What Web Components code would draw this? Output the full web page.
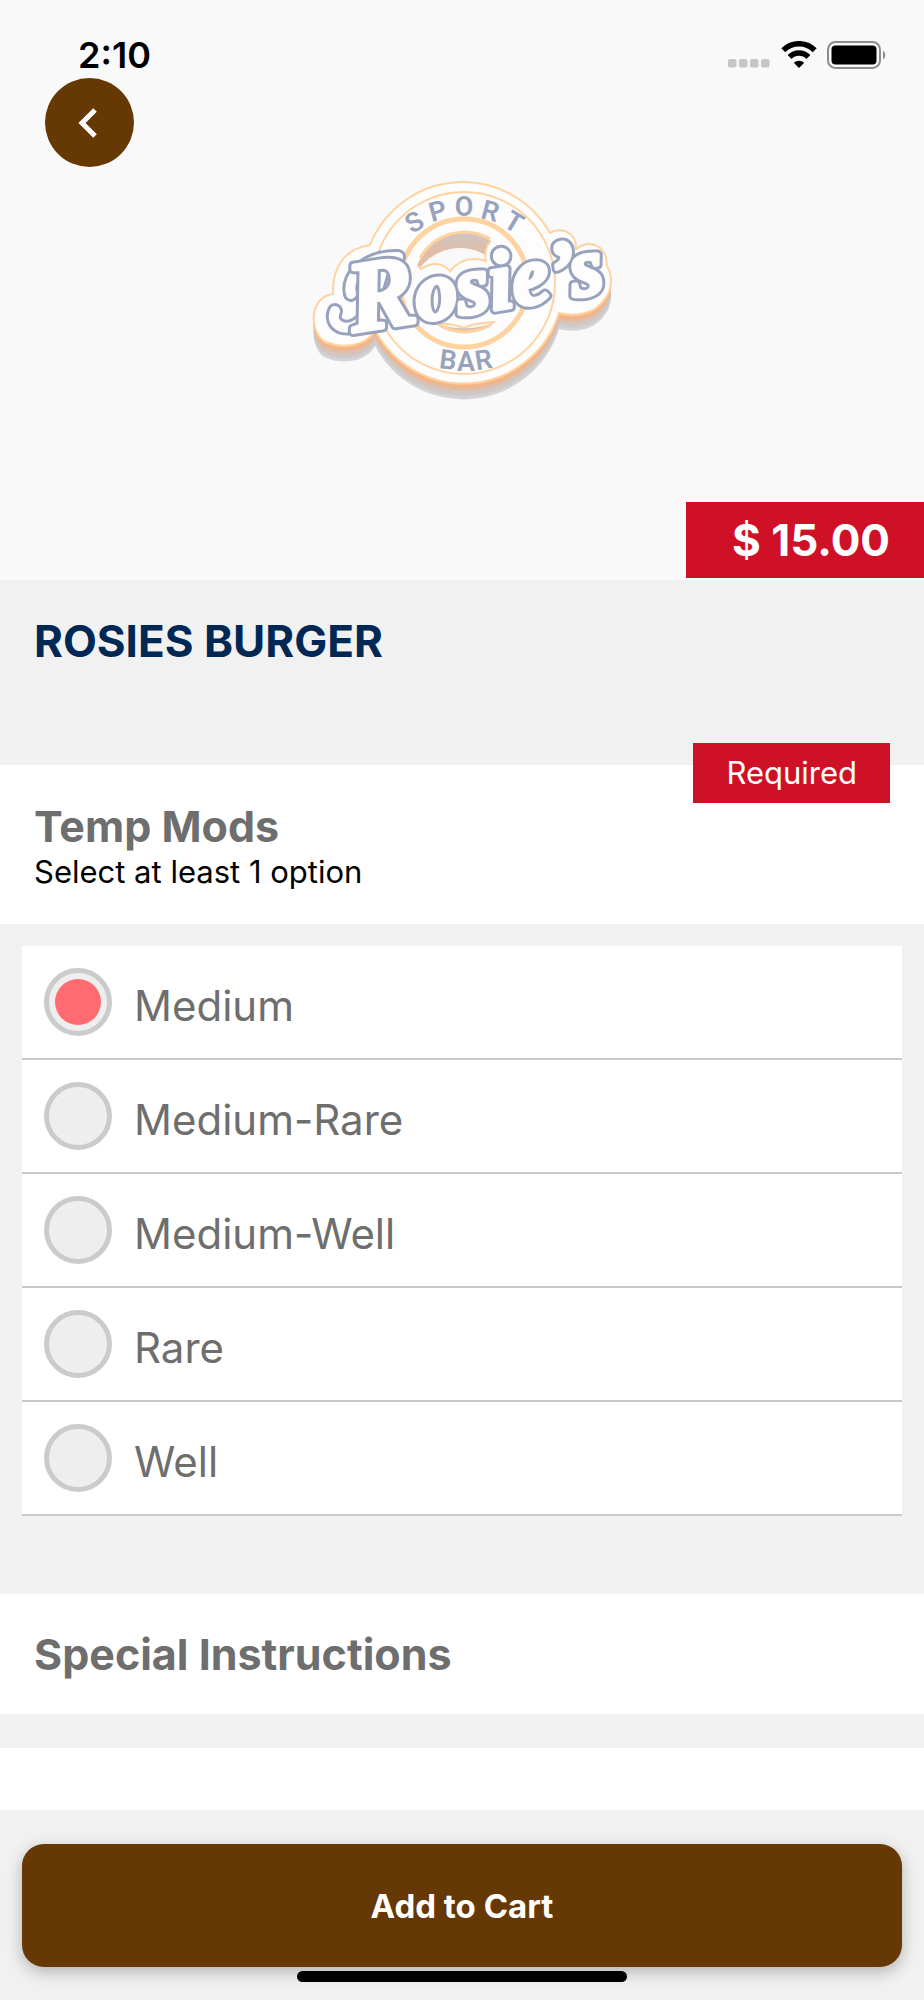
<!DOCTYPE html>
<html lang="en">
<head>
<meta charset="utf-8">
<meta name="viewport" content="width=device-width, initial-scale=1">
<title>Rosies Burger</title>
<style>
    body {
        margin: 0;
        background: #f1f1f1;
        color: #000;
        font-family: Inter, "Liberation Sans", sans-serif;
        --brand: #663803;
        --accent: #ce1126;
        --navy: #002855;
        --muted: #6e6e6e;
        --gutter: 22px;
        --inset: 34px;
    }
</style>
</head>
<body>
<item-page>
    <item-hero slot="hero" price="$ 15.00"></item-hero>
    <item-title slot="title">ROSIES BURGER</item-title>
    <mod-group heading="Temp Mods" hint="Select at least 1 option" badge="Required"
        options="Medium,Medium-Rare,Medium-Well,Rare,Well" selected="Medium"></mod-group>
    <item-notes heading="Special Instructions"></item-notes>
    <cart-bar slot="footer">Add to Cart</cart-bar>
</item-page>

<script>
(function(){
    // Clones the markup into an open shadow root
    function render(host, html){
        const template = document.createElement('template');
        template.innerHTML = html;
        host.attachShadow({mode: 'open'});
        host.shadowRoot.appendChild(template.content.cloneNode(true));
    }

    class ItemPage extends HTMLElement {
        connectedCallback(){
            render(this, `
                <style>
                    :host { display: flex; flex-direction: column; min-height: 100vh; }
                    main { flex: 1; }
                </style>
                <slot name="hero"></slot>
                <main>
                    <slot name="title"></slot>
                    <slot></slot>
                </main>
                <slot name="footer"></slot>
            `);
        }
    }

    class StatusBar extends HTMLElement {
        connectedCallback(){
            render(this, `
                <style>
                    :host {
                        display: flex;
                        justify-content: space-between;
                        align-items: center;
                        box-sizing: border-box;
                        height: 78px;
                        padding: 32px 37px 0 78px;
                    }
                    time { font-size: 36px; line-height: 46px; font-weight: 600; }
                    .icons { display: flex; align-items: center; gap: 10px; }
                    svg { display: block; }
                </style>
                <time>2:10</time>
                <div class="icons">
                    <svg width="43" height="28" viewBox="0 0 43 28" fill="#c6c6c6">
                        <rect x="0" y="18" width="8.500" height="8.500" rx="2"/>
                        <rect x="11" y="18" width="8.500" height="8.500" rx="2"/>
                        <rect x="22" y="18" width="8.500" height="8.500" rx="2"/>
                        <rect x="33" y="18" width="8.500" height="8.500" rx="2"/>
                    </svg>
                    <svg width="36" height="28" viewBox="0 0 36 28">
                        <g fill="none" stroke="#000" stroke-width="5.5">
                            <path d="M2.300 9.300 A 22 22 0 0 1 33.700 9.300"/>
                            <path d="M8.600 16 A 13 13 0 0 1 27.400 16"/>
                        </g>
                        <path d="M18 27 L12.800 21.800 A 7.500 7.500 0 0 1 23.200 21.800 Z"/>
                    </svg>
                    <svg width="60" height="28" viewBox="0 0 60 28">
                        <rect x="1" y="1" width="52" height="26" rx="7.500" fill="none" stroke="#8d8d8d" stroke-width="2"/>
                        <rect x="4.500" y="4.500" width="45" height="19" rx="4"/>
                        <path d="M56 9.500 A 5.500 5.500 0 0 1 56 18.500 Z" fill="#8d8d8d"/>
                    </svg>
                </div>
            `);
        }
    }

    class RosiesLogo extends HTMLElement {
        connectedCallback(){
            // The extruded side is the badge shape repeated, orange on top and grey at the bottom
            const side = ['#d6d6d8', '#d0cfd1', '#cfc9c9', '#d3c5bf', '#dbc0b1', '#e6b99d', '#f3b384', '#fbbf85'];
            const badge = 'M70 75 A100 100 0 0 1 250 63 C258 57 277 60 276 79 C290 69 307 75 307 96 C314 108 311 122 304 130 C294 144 276 147 259 143 A100 100 0 0 1 75 160 C67 176 43 179 26 172 C9 164 8 127 33 124 C32 98 44 79 70 75Z';
            const layers = side.map((fill, i) => `<path d="${badge}" transform="translate(0 ${16 - i * 2})" fill="${fill}"/>`).join('');

            render(this, `
                <style>
                    :host { display: block; width: 324px; }
                    svg { display: block; width: 100%; overflow: visible; }
                    .word { font: italic bold 84px "Liberation Serif", serif; }
                    .small { font: 600 27px Roboto, "Liberation Sans", sans-serif; text-anchor: middle; fill: #98a2bd; }
                </style>
                <svg viewBox="0 0 324 240" role="img" aria-label="Rosie's Sport Bar">
                    <defs>
                        <clipPath id="hole"><circle cx="164" cy="113" r="50"/></clipPath>
                        <linearGradient id="wall" x1="0" y1="0" x2="0" y2="1">
                            <stop offset="0" stop-color="#cfc6c4"/>
                            <stop offset=".2" stop-color="#e0bca6"/>
                            <stop offset="1" stop-color="#f2c49a"/>
                        </linearGradient>
                    </defs>
                    ${layers}
                    <path d="${badge}" fill="#fdfdfd" stroke="#ffd3a0" stroke-width="2"/>
                    <g fill="none" stroke="#ffd3a0">
                        <circle cx="164" cy="113" r="91" stroke-width="2"/>
                        <circle cx="164" cy="113" r="64" stroke-width="5"/>
                    </g>
                    <g clip-path="url(#hole)">
                        <circle cx="164" cy="113" r="51" fill="url(#wall)"/>
                        <circle cx="160" cy="129" r="51" fill="#f9f9f9"/>
                        <path d="M100 92 Q112 88 121 99 Q138 88 150 101 Q164 84 186 91 Q183 76 194 68 L230 80 V152 Q180 150 164 158 Q148 150 100 156Z"
                            fill="#fdfdfd" stroke="#ffd3a0" stroke-width="2"/>
                        <path d="M138 154 Q164 163 194 153 L186 161 Q164 168 142 160Z" fill="#dcc2b2"/>
                    </g>
                    <path d="M120 88 A51 51 0 0 1 190 69 M138 154 Q164 170 192 154" fill="none" stroke="#ffd3a0" stroke-width="3"/>
                    <g class="small">
                        <text transform="translate(119 60) rotate(-31)">S</text>
                        <text transform="translate(140 50) rotate(-15)">P</text>
                        <text transform="translate(164 46)">O</text>
                        <text transform="translate(188 50) rotate(15)">R</text>
                        <text transform="translate(209 60) rotate(31)">T</text>
                        <text transform="translate(147 199) rotate(7)">B</text>
                        <text transform="translate(166 201)">A</text>
                        <text transform="translate(185 199) rotate(-9)">R</text>
                    </g>
                    <!-- swash that leads into the R -->
                    <g fill="none" stroke-linecap="round">
                        <g stroke="#98a2bd" stroke-width="16">
                            <path d="M35 141 C29 155 46 164 60 152 C74 140 78 112 84 96"/>
                            <path d="M98 87 C70 86 46 104 51 124"/>
                        </g>
                        <g stroke="#fdfdfd" stroke-width="10">
                            <path d="M35 141 C29 155 46 164 60 152 C74 140 78 112 84 96"/>
                            <path d="M98 87 C70 86 46 104 51 124"/>
                        </g>
                    </g>
                    <g class="word" transform="translate(53 162) rotate(-9)" fill="#fdfdfd" stroke="#98a2bd"
                        stroke-width="10" stroke-linejoin="round" paint-order="stroke">
                        <text><tspan font-size="100">R</tspan>osie’s</text>
                        <text stroke="#fdfdfd" stroke-width="4" aria-hidden="true"><tspan font-size="100">R</tspan>osie’s</text>
                    </g>
                </svg>
            `);
        }
    }

    class ItemHero extends HTMLElement {
        connectedCallback(){
            render(this, `
                <style>
                    :host { display: flex; flex-direction: column; background: #f9f9f9; padding-bottom: 2px; }
                    button {
                        display: grid;
                        place-items: center;
                        width: 89px;
                        height: 89px;
                        margin: 0 0 0 45px;
                        padding: 0;
                        border: 0;
                        border-radius: 50%;
                        background: var(--brand);
                    }
                    rosies-logo { align-self: center; margin: 3px 0 92px; }
                    .price {
                        align-self: flex-end;
                        box-sizing: border-box;
                        padding: 10px 34px 10px 46px;
                        background: var(--accent);
                        color: #fff;
                        font-size: 44px;
                        line-height: 56px;
                        font-weight: 700;
                    }
                </style>
                <status-bar></status-bar>
                <button type="button" aria-label="Back">
                    <svg width="30" height="32" viewBox="0 0 30 32" fill="none" stroke="#fff" stroke-width="5">
                        <path d="M20 3 L7 16 L20 29"/>
                    </svg>
                </button>
                <rosies-logo></rosies-logo>
                <div class="price"></div>
            `);
            this.shadowRoot.querySelector('.price').textContent = this.getAttribute('price');
        }
    }

    class ItemTitle extends HTMLElement {
        connectedCallback(){
            render(this, `
                <style>
                    :host { display: block; padding: 33px var(--inset) 96px; }
                    h1 { margin: 0; color: var(--navy); font-size: 44px; line-height: 56px; font-weight: 700; }
                </style>
                <h1><slot></slot></h1>
            `);
        }
    }

    class ModGroup extends HTMLElement {
        connectedCallback(){
            render(this, `
                <style>
                    :host { display: block; }
                    header {
                        position: relative;
                        padding: 33px var(--inset) 34px;
                        background: #fff;
                    }
                    h2 { margin: 0; color: var(--muted); font-size: 43px; line-height: 56px; font-weight: 700; }
                    p { margin: 0; font-size: 31px; line-height: 36px; }
                    .badge {
                        position: absolute;
                        top: -22px;
                        right: 34px;
                        padding: 12px 33px;
                        background: var(--accent);
                        color: #fff;
                        font-size: 31px;
                        line-height: 36px;
                    }
                    .options { margin: 22px var(--gutter) 78px; }
                    label {
                        display: flex;
                        align-items: flex-start;
                        gap: 22px;
                        box-sizing: border-box;
                        min-height: 114px;
                        padding: 22px;
                        border-bottom: 2px solid #c8c8c8;
                        background: #fff;
                        color: var(--muted);
                        font-size: 42px;
                        line-height: 56px;
                    }
                    label span { padding-top: 10px; }
                    input {
                        appearance: none;
                        flex: none;
                        display: grid;
                        place-items: center;
                        box-sizing: border-box;
                        width: 68px;
                        height: 68px;
                        margin: 0;
                        border: 5px solid #cbcbcb;
                        border-radius: 50%;
                        background: #eee;
                    }
                    input:checked::before {
                        content: "";
                        width: 46px;
                        height: 46px;
                        border-radius: 50%;
                        background: #ff6b70;
                    }
                </style>
                <header>
                    <div class="badge"></div>
                    <h2 id="heading"></h2>
                    <p></p>
                </header>
                <div class="options" role="radiogroup" aria-labelledby="heading"></div>
            `);
            const root = this.shadowRoot;
            root.querySelector('h2').textContent = this.getAttribute('heading');
            root.querySelector('p').textContent = this.getAttribute('hint');
            root.querySelector('.badge').textContent = this.getAttribute('badge');
            this.getAttribute('options').split(',').forEach((name) => this._addOption(name));
        }

        /**
         * Appends one radio row, all rows share a name so only one is picked
         */
        _addOption(name){
            const label = document.createElement('label');
            const input = document.createElement('input');
            const text = document.createElement('span');
            input.type = 'radio';
            input.name = 'option';
            input.value = name;
            input.checked = name === this.getAttribute('selected');
            text.textContent = name;
            label.append(input, text);
            this.shadowRoot.querySelector('.options').appendChild(label);
        }
    }

    class ItemNotes extends HTMLElement {
        connectedCallback(){
            render(this, `
                <style>
                    :host { display: block; }
                    h2 {
                        margin: 0 0 34px;
                        padding: 32px var(--inset);
                        background: #fff;
                        color: var(--muted);
                        font-size: 43px;
                        line-height: 56px;
                        font-weight: 700;
                    }
                    textarea {
                        display: block;
                        box-sizing: border-box;
                        width: 100%;
                        height: 62px;
                        padding: 12px var(--inset);
                        border: 0;
                        outline: 0;
                        resize: none;
                        background: #fff;
                        font: inherit;
                        font-size: 31px;
                    }
                </style>
                <h2><label for="notes"></label></h2>
                <textarea id="notes"></textarea>
            `);
            this.shadowRoot.querySelector('label').textContent = this.getAttribute('heading');
        }
    }

    class CartBar extends HTMLElement {
        connectedCallback(){
            render(this, `
                <style>
                    :host {
                        display: flex;
                        flex-direction: column;
                        align-items: center;
                        gap: 4px;
                        padding: 34px var(--gutter) 18px;
                    }
                    button {
                        width: 100%;
                        height: 123px;
                        border: 0;
                        border-radius: 22px;
                        background: var(--brand);
                        box-shadow: 0 5px 16px rgba(0, 0, 0, .26);
                        color: #fff;
                        font: inherit;
                        font-size: 33px;
                        font-weight: 700;
                    }
                    .home { position: relative; width: 330px; height: 11px; border-radius: 6px; background: #000; }
                </style>
                <button type="button"><slot></slot></button>
                <div class="home"></div>
            `);
        }
    }

    customElements.define('status-bar', StatusBar);
    customElements.define('rosies-logo', RosiesLogo);
    customElements.define('item-hero', ItemHero);
    customElements.define('item-title', ItemTitle);
    customElements.define('mod-group', ModGroup);
    customElements.define('item-notes', ItemNotes);
    customElements.define('cart-bar', CartBar);
    customElements.define('item-page', ItemPage);
})();
</script>
</body>
</html>
